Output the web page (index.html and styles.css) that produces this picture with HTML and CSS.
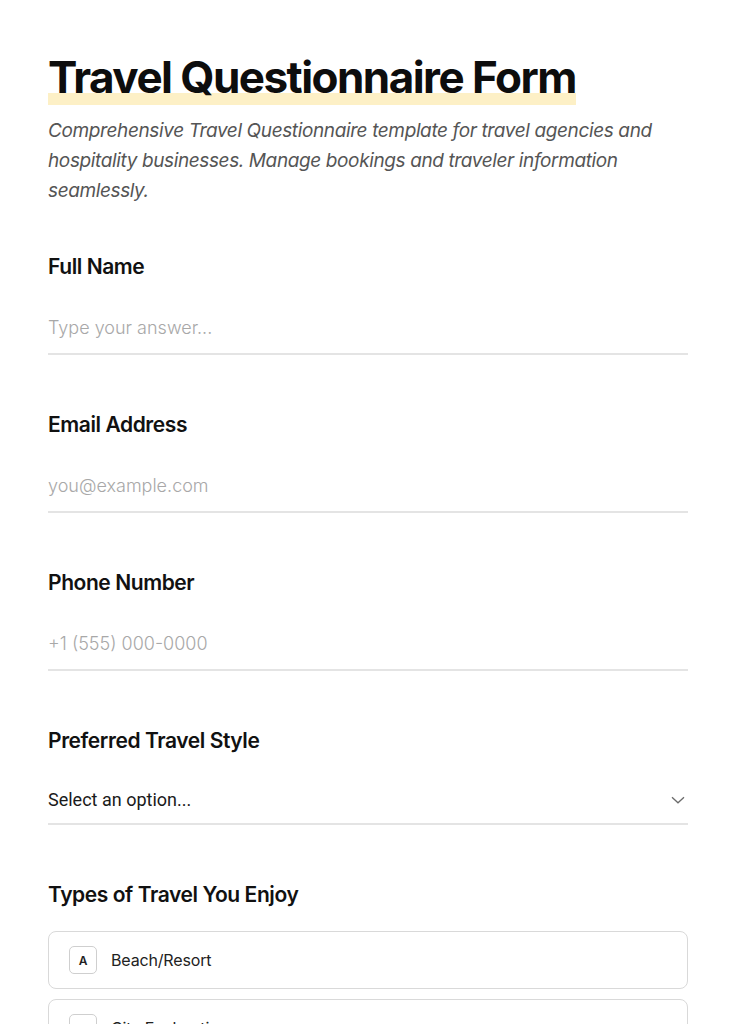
FILE: index.html
```html
<!DOCTYPE html>
<html lang="en">
<head>
<meta charset="utf-8">
<title>Travel Questionnaire Form</title>
<link rel="stylesheet" href="styles.css">
</head>
<body>
<main class="page">
  <header class="intro">
    <h1 class="title"><span class="title-mark">Travel Questionnaire Form</span></h1>
    <p class="desc">Comprehensive Travel Questionnaire template for travel agencies and hospitality businesses. Manage bookings and traveler information seamlessly.</p>
  </header>

  <section class="field">
    <label class="label" for="name">Full Name</label>
    <input class="input" id="name" type="text" placeholder="Type your answer...">
  </section>

  <section class="field">
    <label class="label" for="email">Email Address</label>
    <input class="input" id="email" type="email" placeholder="you@example.com">
  </section>

  <section class="field">
    <label class="label" for="phone">Phone Number</label>
    <input class="input" id="phone" type="tel" placeholder="+1 (555) 000-0000">
  </section>

  <section class="field">
    <div class="label">Preferred Travel Style</div>
    <div class="select">
      <span class="select-text">Select an option...</span>
      <svg class="chev" width="14" height="8" viewBox="0 0 14 8" aria-hidden="true"><path d="M1 1.2 L7 6.8 L13 1.2" fill="none" stroke="#6b6b6b" stroke-width="1.3"/></svg>
    </div>
  </section>

  <section class="field">
    <div class="label">Types of Travel You Enjoy</div>
    <div class="options">
      <div class="option"><span class="key">A</span><span class="opt-text">Beach/Resort</span></div>
      <div class="option"><span class="key">B</span><span class="opt-text">City Exploration</span></div>
      <div class="option"><span class="key">C</span><span class="opt-text">Adventure/Outdoor</span></div>
      <div class="option"><span class="key">D</span><span class="opt-text">Cultural/Historical</span></div>
    </div>
  </section>
</main>
</body>
</html>
```
FILE: styles.css
```css
* { box-sizing: border-box; }
html, body { margin: 0; padding: 0; background: #ffffff; }
body {
  font-family: Inter, "Noto Sans", "Liberation Sans", sans-serif;
  color: #111;
}
.page {
  width: 736px;
  padding: 51px 48px 60px;
}
.intro { margin-bottom: 47px; }
.title {
  margin: 0;
  font-size: 44px;
  font-weight: 700;
  letter-spacing: -0.035em;
  line-height: 52px;
  color: #0d0d0d;
}
.title-mark {
  display: inline-block;
  padding-bottom: 2px;
  background: linear-gradient(to bottom, transparent 42px, #fdf0c6 42px);
}
.desc {
  margin: 11px 0 0;
  font-size: 19px;
  line-height: 30px;
  font-style: italic;
  font-weight: 400;
  color: #555;
  letter-spacing: -0.02em;
}
.field {
  display: flex;
  flex-direction: column;
  gap: 22px;
  margin-bottom: 56px;
}
.label {
  font-size: 21px;
  line-height: 28px;
  font-weight: 600;
  letter-spacing: -0.02em;
  color: #111;
}
.input {
  display: block;
  width: 100%;
  margin: 0;
  padding: 12px 0;
  border: 0;
  border-bottom: 2px solid #e4e4e4;
  outline: none;
  background: transparent;
  font-family: Inter, "Noto Sans", sans-serif;
  font-size: 18px;
  line-height: 26px;
  font-weight: 300;
  color: #111;
}
.input::placeholder { color: #a8a8a8; opacity: 1; }
.select {
  display: flex;
  align-items: center;
  justify-content: space-between;
  padding: 11px 3px 11px 0;
  border-bottom: 2px solid #e4e4e4;
}
.select-text {
  font-family: Roboto, "Liberation Sans", sans-serif;
  font-size: 18px;
  line-height: 24px;
  color: #1a1a1a;
}
.chev { display: block; }
.options {
  display: flex;
  flex-direction: column;
  gap: 10px;
}
.option {
  display: flex;
  align-items: center;
  gap: 14px;
  height: 58px;
  padding: 0 20px;
  border: 1px solid #d9d9d9;
  border-radius: 8px;
}
.key {
  display: flex;
  align-items: center;
  justify-content: center;
  width: 28px;
  height: 28px;
  border: 1px solid #cfcfcf;
  border-radius: 5px;
  font-size: 12px;
  font-weight: 600;
  color: #222;
}
.opt-text {
  font-size: 16px;
  color: #222;
  letter-spacing: -0.01em;
}
```
